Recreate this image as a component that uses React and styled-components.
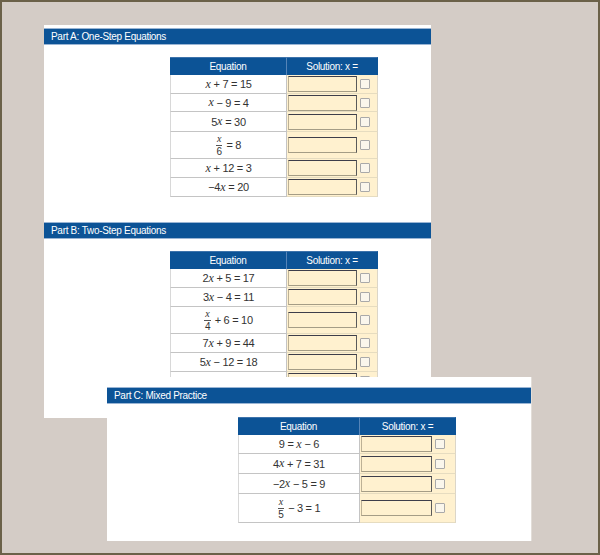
import React from 'react';
import styled, { createGlobalStyle } from 'styled-components';

const Global = createGlobalStyle`
  html, body { margin: 0; padding: 0; }
  body { font-family: "Liberation Sans", Arial, sans-serif; }
`;

const Frame = styled.div`
  position: relative;
  box-sizing: border-box;
  width: 600px;
  height: 555px;
  border: 2px solid #6b6149;
  background: #d4ccc6;
  padding: 23px 0 0 42px;
  overflow: hidden;
`;

const Sheet = styled.div`
  box-sizing: border-box;
  width: 387px;
  height: 393px;
  padding-top: 3px;
  background: #ffffff;
  overflow: hidden;
`;

const Overlay = styled.div`
  position: absolute;
  left: 105px;
  top: 375px;
  box-sizing: border-box;
  width: 425px;
  height: 164px;
  padding-top: 10px;
  background: #ffffff;
  border-right: 1px solid #e2ddd8;
`;

const Section = styled.section`
  & + & { margin-top: 25px; }
`;

const Bar = styled.div`
  box-sizing: border-box;
  height: 17px;
  display: flex;
  align-items: center;
  padding-left: 7px;
  background: #0c5396;
  border-top: 1px solid #9ab5d4;
  border-bottom: 1px solid #9ab5d4;
  color: #ffffff;
  font-size: 10px;
  letter-spacing: -0.3px;
`;

const Grid = styled.div`
  margin: ${p => p.$top}px 0 0 ${p => p.$indent}px;
  width: ${p => p.$eq + p.$sol}px;
`;

const Row = styled.div`
  display: grid;
  grid-template-columns: ${p => p.$eq}px ${p => p.$sol}px;
  height: ${p => p.$h}px;
`;

const HeadCell = styled.div`
  box-sizing: border-box;
  display: flex;
  align-items: center;
  justify-content: center;
  background: #0c5396;
  color: #ffffff;
  font-size: 10px;
  letter-spacing: -0.3px;
  border-right: 1px solid ${p => (p.$last ? '#0c5396' : '#5584b8')};
  border-top: 1px solid #3d73ab;
`;

const EqCell = styled.div`
  box-sizing: border-box;
  display: flex;
  align-items: center;
  justify-content: center;
  color: #333333;
  font-size: 11px;
  letter-spacing: -0.3px;
  white-space: pre;
  border-left: 1px solid #d8d8d8;
  border-right: 1px solid #c4c4c4;
  border-bottom: 1px solid #c4c4c4;
`;

const SolCell = styled.div`
  box-sizing: border-box;
  display: flex;
  align-items: center;
  gap: 3px;
  padding-left: 1px;
  background: #fff1cf;
  border-right: 1px solid #dcd6c8;
  border-bottom: 1px solid #e6dcc0;
`;

const AnswerInput = styled.input`
  box-sizing: border-box;
  width: ${p => p.$w}px;
  height: 16px;
  margin: 0;
  padding: 0 2px;
  background: #fff1cf;
  border-style: solid;
  border-width: 1px;
  border-color: #3e3e4a #5a5a5a #a59d86 #bdb195;
  outline: none;
`;

const Check = styled.span`
  box-sizing: border-box;
  width: 10px;
  height: 10px;
  border: 1px solid #a9a9a9;
  border-radius: 1px;
  background: #faf6ec;
`;

const V = styled.span`
  font-family: "Liberation Serif", "Times New Roman", serif;
  font-style: italic;
  font-size: 12px;
  letter-spacing: 0;
`;

const FracBox = styled.span`
  display: inline-flex;
  flex-direction: column;
  align-items: center;
  margin-right: 4px;
  line-height: 1;
  font-size: 10px;
`;

const Num = styled.span`
  padding: 0 1px 1px;
  border-bottom: 1px solid #555555;
  & ${V} { font-size: 10px; }
`;

const Den = styled.span`
  padding-top: 1px;
`;

const Frac = ({ num, den }) => (
  <FracBox>
    <Num>{num}</Num>
    <Den>{den}</Den>
  </FracBox>
);

const x = <V>x</V>;

const partA = [
  { h: 19, eq: <>{x} + 7 = 15</> },
  { h: 18, eq: <>{x} − 9 = 4</> },
  { h: 20, eq: <>5{x} = 30</> },
  { h: 27, eq: <><Frac num={x} den="6" />= 8</> },
  { h: 19, eq: <>{x} + 12 = 3</> },
  { h: 19, eq: <>−4{x} = 20</> },
];

const partB = [
  { h: 19, eq: <>2{x} + 5 = 17</> },
  { h: 19, eq: <>3{x} − 4 = 11</> },
  { h: 27, eq: <><Frac num={x} den="4" />+ 6 = 10</> },
  { h: 19, eq: <>7{x} + 9 = 44</> },
  { h: 19, eq: <>5{x} − 12 = 18</> },
  { h: 19, eq: <>2{x} − 3 = 7</> },
];

const partC = [
  { h: 19, eq: <>9 = {x} − 6</> },
  { h: 20, eq: <>4{x} + 7 = 31</> },
  { h: 20, eq: <>−2{x} − 5 = 9</> },
  { h: 29, eq: <><Frac num={x} den="5" />− 3 = 1</> },
];

const EquationTable = ({ rows, eq, sol, inputW, top, indent }) => (
  <Grid $eq={eq} $sol={sol} $top={top} $indent={indent}>
    <Row $eq={eq} $sol={sol} $h={18}>
      <HeadCell>Equation</HeadCell>
      <HeadCell $last>Solution: x =</HeadCell>
    </Row>
    {rows.map((r, i) => (
      <Row key={i} $eq={eq} $sol={sol} $h={r.h}>
        <EqCell>{r.eq}</EqCell>
        <SolCell>
          <AnswerInput $w={inputW} aria-label="solution" />
          <Check />
        </SolCell>
      </Row>
    ))}
  </Grid>
);

export default function App() {
  return (
    <>
      <Global />
      <Frame>
        <Sheet>
          <Section>
            <Bar>Part A: One-Step Equations</Bar>
            <EquationTable rows={partA} eq={117} sol={91} inputW={69} top={12} indent={126} />
          </Section>
          <Section>
            <Bar>Part B: Two-Step Equations</Bar>
            <EquationTable rows={partB} eq={117} sol={91} inputW={69} top={12} indent={126} />
          </Section>
        </Sheet>
        <Overlay>
          <Bar>Part C: Mixed Practice</Bar>
          <EquationTable rows={partC} eq={122} sol={96} inputW={71} top={13} indent={131} />
        </Overlay>
      </Frame>
    </>
  );
}
